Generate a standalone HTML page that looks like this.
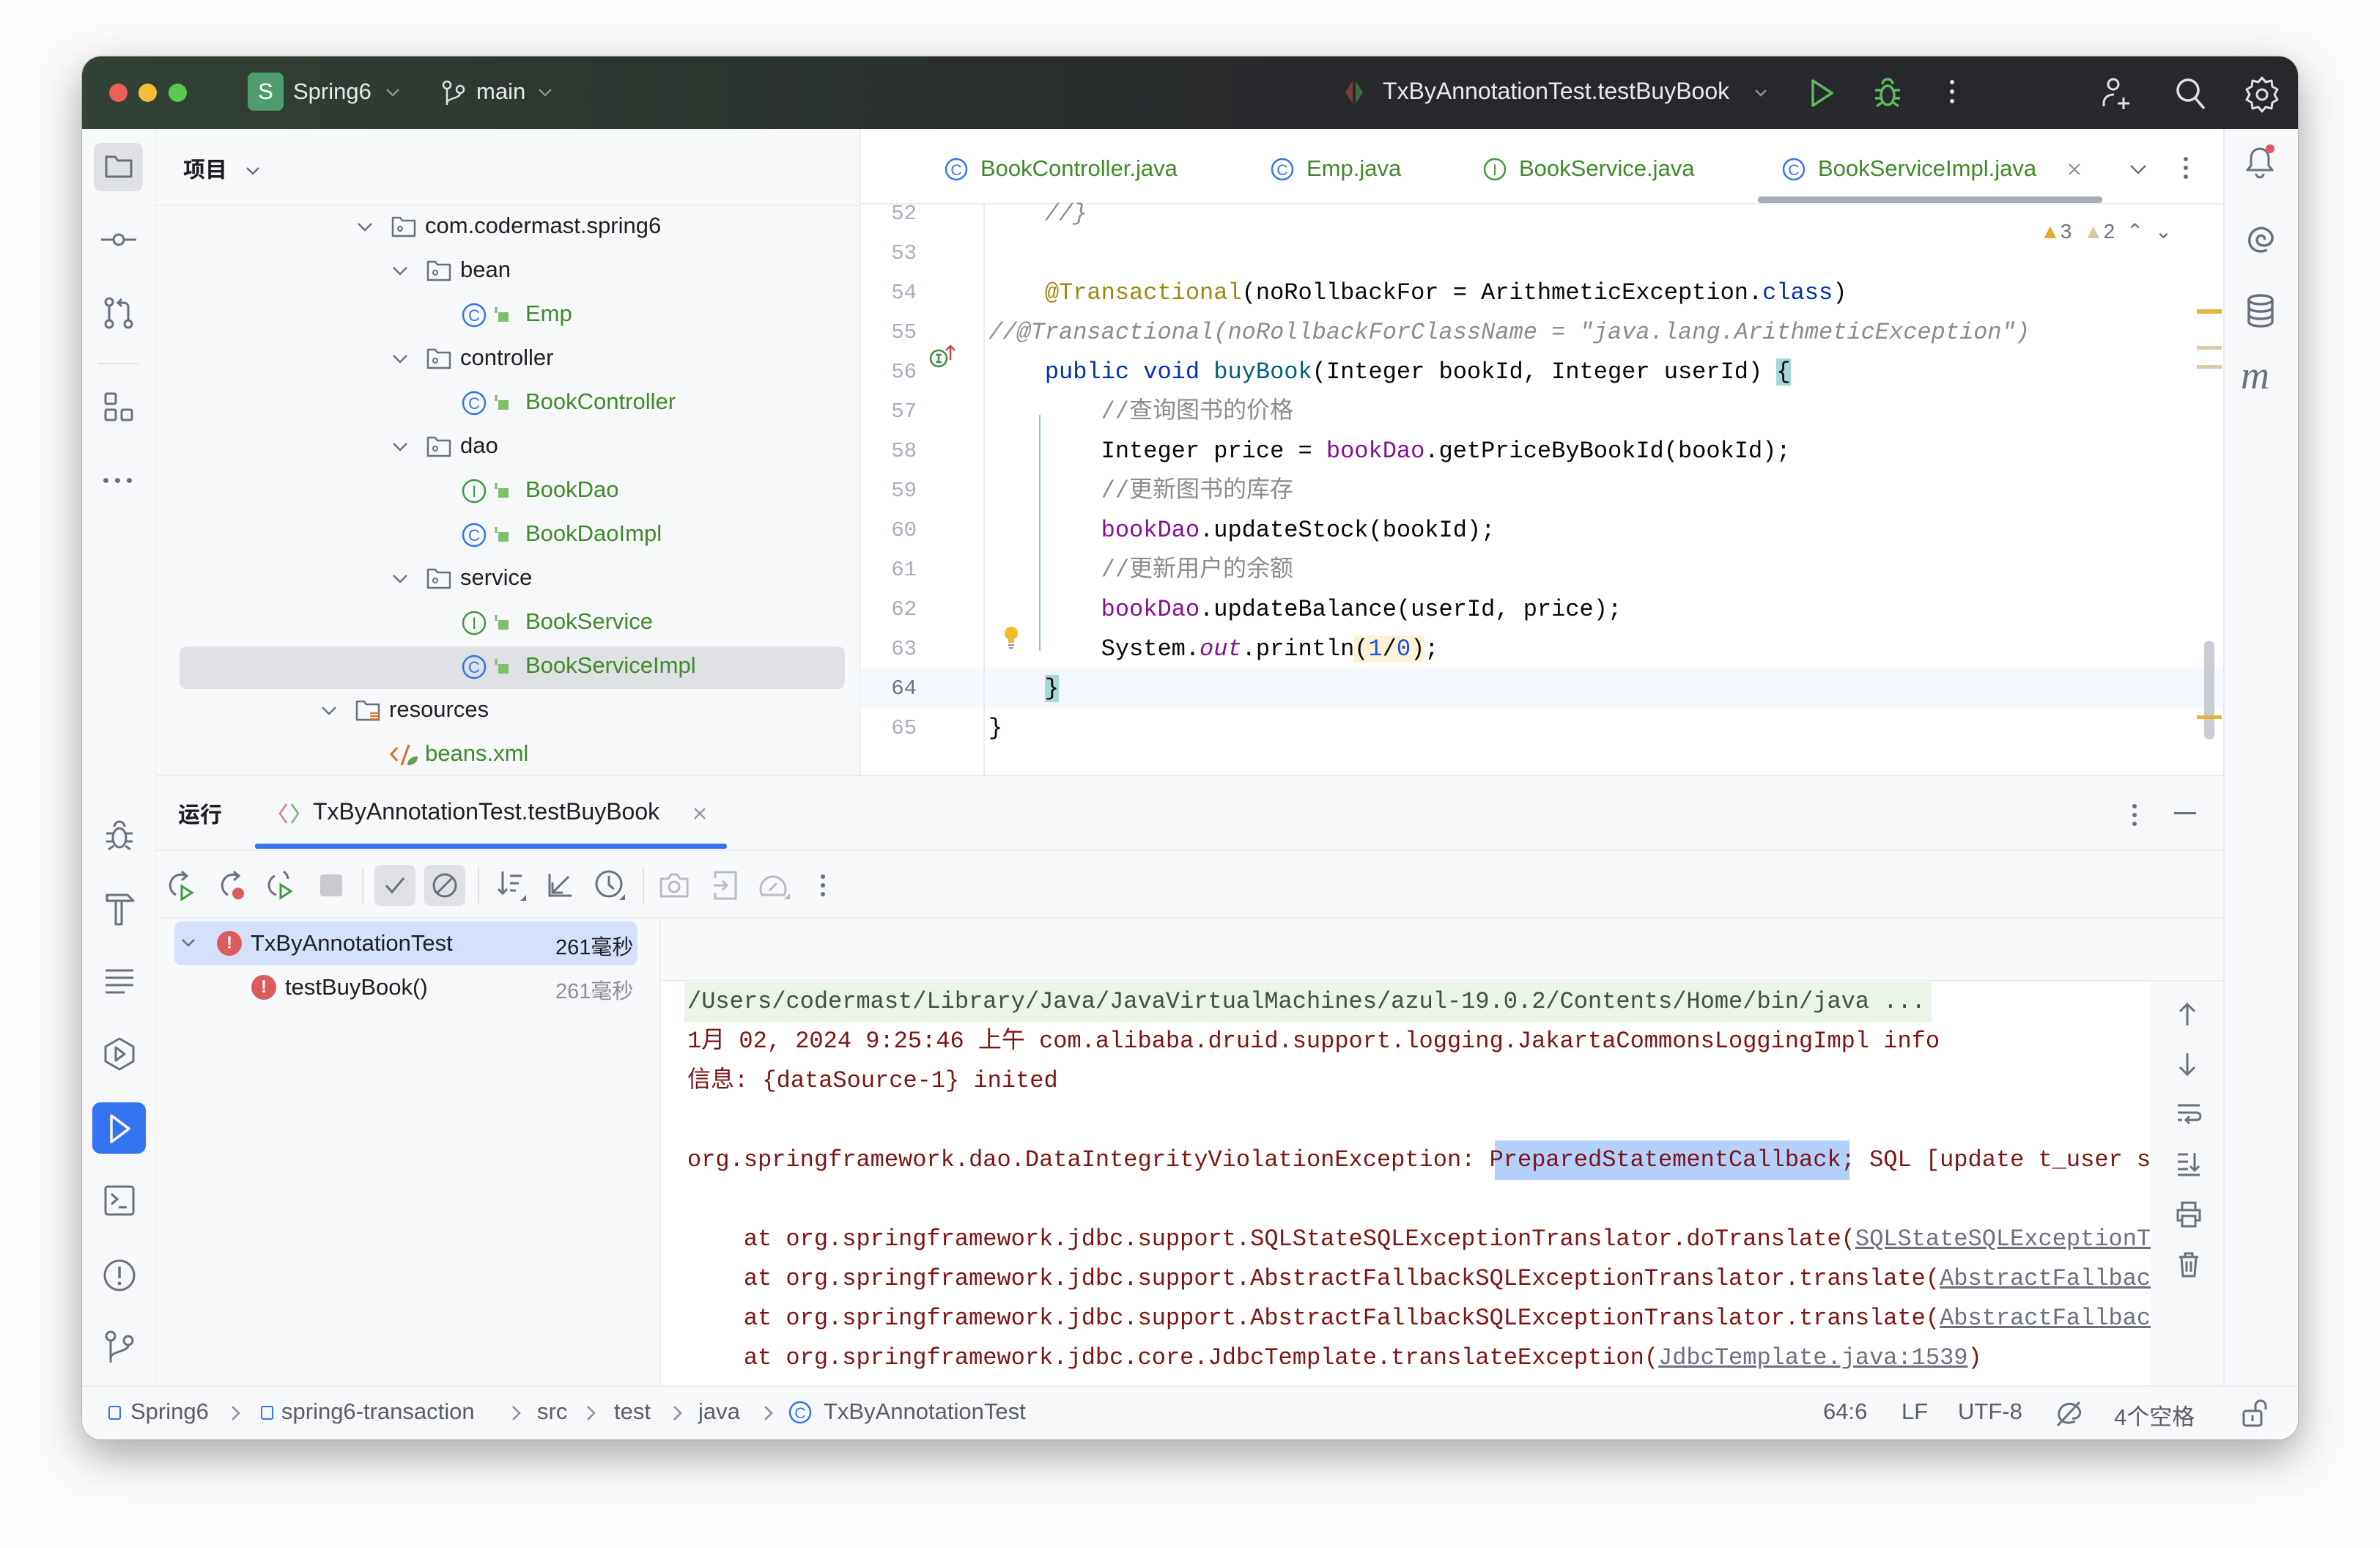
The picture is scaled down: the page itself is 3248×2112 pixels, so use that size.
<!DOCTYPE html>
<html><head><meta charset="utf-8"><style>
*{margin:0;padding:0;box-sizing:border-box}
html,body{width:3248px;height:2112px;background:#fbfbfb;overflow:hidden;font-family:"Liberation Sans","Noto Sans CJK SC",sans-serif}
.win{position:absolute;left:112px;top:77px;width:3024px;height:1887px;border-radius:26px;background:#f7f8fa;overflow:hidden;box-shadow:0 20px 60px rgba(0,0,0,.35),0 0 0 1px rgba(0,0,0,.15)}
.a{position:absolute;white-space:pre}
.ui{font-size:31px;color:#1e1f22}
.mono{font-family:"Liberation Mono","Noto Sans CJK SC",monospace;font-size:32px}
.g{color:#3f8a2a}
svg{position:absolute;overflow:visible}
</style></head><body>
<div class="win">
<div class="a" style="left:0;top:0;width:3024px;height:99px;background:linear-gradient(90deg,#324236 0%,#2b332e 30%,#27282c 55%,#27282c 100%)"></div>
<div class="a" style="left:37px;top:37px;width:25px;height:25px;border-radius:50%;background:#ee5f57"></div>
<div class="a" style="left:77px;top:37px;width:25px;height:25px;border-radius:50%;background:#f6bd3a"></div>
<div class="a" style="left:118px;top:37px;width:25px;height:25px;border-radius:50%;background:#5ac94e"></div>
<div class="a" style="left:226px;top:22px;width:49px;height:52px;border-radius:8px;background:#4f9c6e;color:#fff;font-size:31px;text-align:center;line-height:52px">S</div>
<div class="a" style="left:288px;top:30px;font-size:31px;color:#e8e9ec">Spring6</div>
<svg style="left:414px;top:42px" width="20" height="14"><path d="M2 3l8 8 8-8" fill="none" stroke="#8c8f96" stroke-width="2.5"/></svg>
<svg style="left:490px;top:32px" width="34" height="36"><circle cx="8" cy="7" r="5" fill="none" stroke="#dfe1e5" stroke-width="2.5"/><circle cx="26" cy="13" r="5" fill="none" stroke="#dfe1e5" stroke-width="2.5"/><path d="M8 12v22M26 18c0 8-18 6-18 14" fill="none" stroke="#dfe1e5" stroke-width="2.5"/></svg>
<div class="a" style="left:538px;top:30px;font-size:31px;color:#e8e9ec">main</div>
<svg style="left:622px;top:42px" width="20" height="14"><path d="M2 3l8 8 8-8" fill="none" stroke="#8c8f96" stroke-width="2.5"/></svg>
<svg style="left:1722px;top:32px" width="30" height="34"><path d="M12 2L2 17l10 15z" fill="#7b3b3b"/><path d="M16 2l10 15-10 15z" fill="#3b6b3f"/></svg>
<div class="a" style="left:1775px;top:29px;font-size:32px;color:#e8e9ec">TxByAnnotationTest.testBuyBook</div>
<svg style="left:2282px;top:44px" width="18" height="12"><path d="M2 2l7 7 7-7" fill="none" stroke="#8c8f96" stroke-width="2.5"/></svg>
<svg style="left:2358px;top:30px" width="34" height="40"><path d="M4 3l26 17L4 37z" fill="none" stroke="#5fb85f" stroke-width="3.5" stroke-linejoin="round"/></svg>
<svg style="left:2444px;top:28px" width="40" height="44"><ellipse cx="20" cy="25" rx="9" ry="13" fill="none" stroke="#5fb85f" stroke-width="3.5"/><path d="M13 10a7 7 0 0114 0M3 18h8M29 18h8M3 29h8M29 29h8M5 40l7-5M35 40l-7-5" fill="none" stroke="#5fb85f" stroke-width="3.5"/></svg>
<div class="a" style="left:2549px;top:32px;width:6px;height:6px;border-radius:3px;background:#dfe1e5;box-shadow:0 13px 0 #dfe1e5,0 26px 0 #dfe1e5"></div>
<svg style="left:2756px;top:28px" width="46" height="46"><circle cx="16" cy="10" r="7" fill="none" stroke="#dfe1e5" stroke-width="3"/><path d="M3 40v-4c0-8 6-12 14-12" fill="none" stroke="#dfe1e5" stroke-width="3"/><path d="M30 28v16M22 36h16" stroke="#dfe1e5" stroke-width="3"/></svg>
<svg style="left:2856px;top:28px" width="44" height="46"><circle cx="18" cy="18" r="14" fill="none" stroke="#dfe1e5" stroke-width="3.5"/><path d="M28 29l12 14" stroke="#dfe1e5" stroke-width="3.5"/></svg>
<svg style="left:2952px;top:27px" width="46" height="46"><path d="M23 2l5 6 8-2 1 8 7 4-4 7 4 7-7 4-1 8-8-2-5 6-5-6-8 2-1-8-7-4 4-7-4-7 7-4 1-8 8 2z" fill="none" stroke="#dfe1e5" stroke-width="3" stroke-linejoin="round"/><circle cx="23" cy="25" r="7" fill="none" stroke="#dfe1e5" stroke-width="3"/></svg>

<div class="a" style="left:100px;top:99px;width:1px;height:1792px;background:#ebecf0"></div>
<div class="a" style="left:16px;top:118px;width:67px;height:66px;border-radius:10px;background:#dfe1e5"></div>
<svg style="left:31px;top:133px" width="38" height="34"><path d="M2 4h12l4 5h18v22H2z" fill="none" stroke="#6c707e" stroke-width="3" stroke-linejoin="round"/></svg>
<svg style="left:26px;top:240px" width="48" height="20"><circle cx="24" cy="10" r="7" fill="none" stroke="#6c707e" stroke-width="3"/><path d="M0 10h17M31 10h17" stroke="#6c707e" stroke-width="3"/></svg>
<svg style="left:30px;top:328px" width="40" height="44"><circle cx="7" cy="7" r="5" fill="none" stroke="#6c707e" stroke-width="3"/><circle cx="7" cy="37" r="5" fill="none" stroke="#6c707e" stroke-width="3"/><circle cx="33" cy="37" r="5" fill="none" stroke="#6c707e" stroke-width="3"/><path d="M7 12v20M33 32V14c0-4-3-6-7-6h-6M24 3l-5 5 5 5" fill="none" stroke="#6c707e" stroke-width="3"/></svg>
<div class="a" style="left:22px;top:418px;width:56px;height:2px;background:#dfe1e5"></div>
<svg style="left:30px;top:458px" width="40" height="42"><rect x="2" y="2" width="14" height="14" rx="2" fill="none" stroke="#6c707e" stroke-width="3"/><rect x="2" y="24" width="14" height="14" rx="2" fill="none" stroke="#6c707e" stroke-width="3"/><rect x="24" y="24" width="14" height="14" rx="2" fill="none" stroke="#6c707e" stroke-width="3"/></svg>
<div class="a" style="left:29px;top:575px;width:7px;height:7px;border-radius:4px;background:#6c707e;box-shadow:16px 0 0 #6c707e,32px 0 0 #6c707e"></div>
<svg style="left:30px;top:1040px" width="42" height="46"><ellipse cx="21" cy="26" rx="9" ry="13" fill="none" stroke="#6c707e" stroke-width="3"/><path d="M14 11a7 7 0 0114 0M3 20h9M30 20h9M3 31h9M30 31h9M6 42l7-5M36 42l-7-5" fill="none" stroke="#6c707e" stroke-width="3"/></svg>
<svg style="left:30px;top:1140px" width="44" height="46"><path d="M4 4h28l8 8H4zM16 12v32h8V12" fill="none" stroke="#6c707e" stroke-width="3" stroke-linejoin="round"/></svg>
<svg style="left:30px;top:1244px" width="42" height="36"><path d="M2 3h38M2 13h38M2 23h38M2 33h26" stroke="#6c707e" stroke-width="3"/></svg>
<svg style="left:28px;top:1338px" width="46" height="46"><path d="M23 2l19 11v20L23 44 4 33V13z" fill="none" stroke="#6c707e" stroke-width="3" stroke-linejoin="round"/><path d="M18 14l12 9-12 9z" fill="none" stroke="#6c707e" stroke-width="3" stroke-linejoin="round"/></svg>
<div class="a" style="left:14px;top:1427px;width:73px;height:70px;border-radius:11px;background:#3574f0"></div>
<svg style="left:36px;top:1442px" width="32" height="42"><path d="M4 3l24 18L4 39z" fill="none" stroke="#fff" stroke-width="3.5" stroke-linejoin="round"/></svg>
<svg style="left:30px;top:1540px" width="42" height="42"><rect x="2" y="2" width="38" height="38" rx="3" fill="none" stroke="#6c707e" stroke-width="3"/><path d="M10 12l8 7-8 7M20 30h11" fill="none" stroke="#6c707e" stroke-width="3"/></svg>
<svg style="left:28px;top:1640px" width="46" height="46"><circle cx="23" cy="23" r="20" fill="none" stroke="#6c707e" stroke-width="3"/><path d="M23 11v16" stroke="#6c707e" stroke-width="3.5"/><circle cx="23" cy="34" r="2.5" fill="#6c707e"/></svg>
<svg style="left:30px;top:1738px" width="42" height="46"><circle cx="9" cy="8" r="6" fill="none" stroke="#6c707e" stroke-width="3"/><circle cx="33" cy="14" r="6" fill="none" stroke="#6c707e" stroke-width="3"/><path d="M9 14v30M33 20c0 10-24 8-24 18" fill="none" stroke="#6c707e" stroke-width="3"/></svg>

<div class="a ui" style="left:138px;top:130px;font-weight:bold;font-family:'Noto Sans CJK SC',sans-serif;font-size:30px;line-height:44px">项目</div>
<svg style="left:223px;top:150px" width="20" height="12"><path d="M2 2l8 8 8-8" fill="none" stroke="#6c707e" stroke-width="2.5"/></svg>
<div class="a" style="left:101px;top:202px;width:962px;height:2px;background:#ebecf0"></div>
<div class="a" style="left:1062px;top:99px;width:2px;height:882px;background:#ebecf0"></div>
<div class="a" style="left:133px;top:805px;width:908px;height:58px;border-radius:10px;background:#dfe1e5"></div>
<div id="tree"></div>

<div class="a" style="left:1063px;top:99px;width:1860px;height:882px;background:#fff"></div>
<div class="a" style="left:1063px;top:200px;width:1860px;height:2px;background:#ebecf0"></div>
<div class="a" style="left:2287px;top:191px;width:470px;height:9px;border-radius:4px;background:#a9adb8"></div>
<div id="tabs"></div>
<div class="a" style="left:1063px;top:835px;width:1860px;height:54px;background:#f5f8fe"></div>
<div class="a" style="left:1230px;top:202px;width:2px;height:779px;background:#ebecf0"></div>
<div class="a" style="left:1306px;top:489px;width:2px;height:322px;background:#8cc3bd"></div>
<div id="code"></div>
<div class="a" style="left:2672px;top:219px;font-size:28px;color:#6c707e;line-height:40px"><span style="color:#e5a823">▲</span>3 &nbsp;<span style="color:#d8c9a0">▲</span>2 &nbsp;⌃ &nbsp;⌄</div>
<div class="a" style="left:2886px;top:345px;width:34px;height:6px;background:#e8b33b"></div>
<div class="a" style="left:2886px;top:395px;width:34px;height:5px;background:#d9ccaa"></div>
<div class="a" style="left:2886px;top:421px;width:34px;height:5px;background:#d9ccaa"></div>
<div class="a" style="left:2896px;top:797px;width:14px;height:135px;border-radius:7px;background:#c9ccd3"></div>
<div class="a" style="left:2886px;top:899px;width:34px;height:5px;background:#e8b33b"></div>
<div class="a" style="left:2922px;top:99px;width:2px;height:1792px;background:#ebecf0"></div>
<svg style="left:2952px;top:120px" width="40" height="46"><path d="M20 6c-8 0-12 6-12 13v10l-5 6h34l-5-6V19c0-7-4-13-12-13zM15 40a5 5 0 0010 0" fill="none" stroke="#6c707e" stroke-width="3" stroke-linejoin="round"/><circle cx="34" cy="6" r="6" fill="#e55765"/></svg>
<svg style="left:2952px;top:226px" width="40" height="44"><path d="M30 38C14 44 4 34 6 22S22 4 32 12s4 20-6 20-12-8-8-12 10 0 8 4" fill="none" stroke="#6c707e" stroke-width="3.5"/></svg>
<svg style="left:2954px;top:324px" width="38" height="46"><ellipse cx="19" cy="8" rx="16" ry="6" fill="none" stroke="#6c707e" stroke-width="3.5"/><path d="M3 8v30c0 8 32 8 32 0V8M3 18c0 8 32 8 32 0M3 28c0 8 32 8 32 0" fill="none" stroke="#6c707e" stroke-width="3.5"/></svg>
<div class="a" style="left:2946px;top:404px;font-size:54px;font-style:italic;color:#6c707e;font-family:'Liberation Serif',serif">m</div>

<div class="a" style="left:101px;top:980px;width:2822px;height:2px;background:#ebecf0"></div>
<div class="a ui" style="left:131px;top:1010px;font-weight:bold;font-size:30px;font-family:'Noto Sans CJK SC',sans-serif;line-height:44px">运行</div>
<svg style="left:268px;top:1018px" width="34" height="30"><path d="M11 2L2 15l9 13" fill="none" stroke="#d48383" stroke-width="2.5"/><path d="M18 2l9 13-9 13" fill="none" stroke="#7db37d" stroke-width="2.5"/></svg>
<div class="a ui" style="left:315px;top:1012px;font-size:32px">TxByAnnotationTest.testBuyBook</div>
<svg style="left:834px;top:1024px" width="18" height="18"><path d="M2 2l14 14M16 2L2 16" stroke="#8c8f96" stroke-width="2.2"/></svg>
<div class="a" style="left:236px;top:1074px;width:644px;height:7px;border-radius:3px;background:#3574f0"></div>
<div class="a" style="left:2798px;top:1020px;width:6px;height:6px;border-radius:3px;background:#6c707e;box-shadow:0 12px 0 #6c707e,0 24px 0 #6c707e"></div>
<div class="a" style="left:2855px;top:1031px;width:30px;height:3px;background:#6c707e"></div>
<div class="a" style="left:101px;top:1082px;width:2822px;height:2px;background:#ebecf0"></div>
<div id="tb"></div>
<div class="a" style="left:101px;top:1174px;width:2822px;height:2px;background:#ebecf0"></div>
<div class="a" style="left:788px;top:1176px;width:2px;height:715px;background:#ebecf0"></div>
<div class="a" style="left:126px;top:1180px;width:632px;height:60px;border-radius:10px;background:#d5e0fb"></div>
<svg style="left:135px;top:1203px" width="20" height="12"><path d="M2 2l8 8 8-8" fill="none" stroke="#6c707e" stroke-width="2.5"/></svg>
<div class="a" style="left:184px;top:1193px;width:34px;height:34px;border-radius:17px;background:#db5c5c;color:#fff;font-weight:bold;font-size:24px;text-align:center;line-height:34px">!</div>
<div class="a ui" style="left:230px;top:1192px">TxByAnnotationTest</div>
<div class="a ui" style="left:646px;top:1192px;font-size:29px">261毫秒</div>
<div class="a" style="left:231px;top:1253px;width:34px;height:34px;border-radius:17px;background:#db5c5c;color:#fff;font-weight:bold;font-size:24px;text-align:center;line-height:34px">!</div>
<div class="a ui" style="left:277px;top:1252px">testBuyBook()</div>
<div class="a ui" style="left:646px;top:1252px;font-size:29px;color:#8c8f96">261毫秒</div>
<div class="a" style="left:797px;top:1265px;width:34px;height:34px;border-radius:17px;background:#db5c5c;color:#fff;font-weight:bold;font-size:24px;text-align:center;line-height:34px">!</div>
<div class="a ui" style="left:842px;top:1264px;font-size:30px;color:#b2261c">测试 失败: 1<span style="color:#818594">共 1 个测试 – 261毫秒</span></div>
<div class="a" style="left:790px;top:1260px;width:2133px;height:2px;background:#ebecf0"></div>
<div class="a" style="left:790px;top:1262px;width:2034px;height:629px;background:#fff"></div>
<div class="a" style="left:822px;top:1263px;width:1702px;height:54px;background:#eaf4e7"></div>
<div class="a" style="left:1928px;top:1479px;width:484px;height:54px;background:#b3d1fb"></div>
<div id="con"></div>
<div id="cicons"></div>
<div class="a" style="left:0;top:1813px;width:3024px;height:2px;background:#ebecf0"></div>
<div class="a" style="left:0;top:1815px;width:3024px;height:72px;background:#f7f8fa"></div>
<div id="sb"></div>
</div>
<script>
function add(id,h){document.getElementById(id).outerHTML=h}
var T=[[0,"com.codermast.spring6","pkg"],[1,"bean","pkg"],[2,"Emp","C"],[1,"controller","pkg"],[2,"BookController","C"],[1,"dao","pkg"],[2,"BookDao","I"],[2,"BookDaoImpl","C"],[1,"service","pkg"],[2,"BookService","I"],[2,"BookServiceImpl","C"],[-1,"resources","res"],[0,"beans.xml","xml"]];
var h="";
T.forEach(function(r,i){var top=202+i*60,cy=top+30;var lv=r[0];
 if(r[2]=="pkg"||r[2]=="res"){var cx=(lv==-1?326:(lv==0?375:423));
  h+='<svg style="left:'+cx+'px;top:'+(cy-6)+'px" width="22" height="14"><path d="M2 2l9 9 9-9" fill="none" stroke="#6c707e" stroke-width="2.5"/></svg>';
  var fx=cx+47;
  h+='<svg style="left:'+fx+'px;top:'+(cy-15)+'px" width="34" height="30"><path d="M2 3h10l3 4h17v21H2z" fill="none" stroke="#6c707e" stroke-width="2.5" stroke-linejoin="round"/>'+(r[2]=="pkg"?'<circle cx="12" cy="18" r="3" fill="none" stroke="#6c707e" stroke-width="2"/>':'<path d="M20 19h12M20 23h12M20 27h12" stroke="#e06b2c" stroke-width="2"/>')+'</svg>';
  h+='<div class="a ui" style="left:'+(fx+46)+'px;top:'+(cy-19)+'px">'+r[1]+'</div>';}
 else if(r[2]=="xml"){h+='<svg style="left:420px;top:'+(cy-17)+'px" width="40" height="36"><path d="M10 8L2 17l8 9M16 32L26 4" fill="none" stroke="#e06b2c" stroke-width="3"/><path d="M24 32c0-8 6-12 14-12 0 8-6 12-14 12z" fill="#5fa055"/></svg><div class="a ui g" style="left:468px;top:'+(cy-19)+'px">'+r[1]+'</div>';}
 else{var c=r[2]=="C"?"#3574f0":"#3f9a3f";
  h+='<svg style="left:517px;top:'+(cy-17)+'px" width="36" height="36"><circle cx="18" cy="18" r="15" fill="none" stroke="'+c+'" stroke-width="2.5"/><text x="18" y="26" font-size="22" text-anchor="middle" fill="'+c+'" font-family="Liberation Sans">'+r[2]+'</text></svg>';
  h+='<svg style="left:562px;top:'+(cy-12)+'px" width="22" height="24"><path d="M3 2v8" stroke="#7fbf6a" stroke-width="3"/><rect x="6" y="9" width="14" height="13" fill="#7fbf6a"/></svg>';
  h+='<div class="a ui g" style="left:605px;top:'+(cy-19)+'px">'+r[1]+'</div>';}
});
add("tree",h);
var TB=[[1176,"C","BookController.java"],[1621,"C","Emp.java"],[1911,"I","BookService.java"],[2319,"C","BookServiceImpl.java"]];h="";
TB.forEach(function(t){var c=t[1]=="C"?"#3574f0":"#3f9a3f";h+='<svg style="left:'+t[0]+'px;top:137px" width="34" height="34"><circle cx="17" cy="17" r="14" fill="none" stroke="'+c+'" stroke-width="2.5"/><text x="17" y="25" font-size="21" text-anchor="middle" fill="'+c+'" font-family="Liberation Sans">'+t[1]+'</text></svg><div class="a ui g" style="left:'+(t[0]+50)+'px;top:135px">'+t[2]+'</div>';});
h+='<svg style="left:2710px;top:145px" width="18" height="18"><path d="M2 2l14 14M16 2L2 16" stroke="#8c8f96" stroke-width="2.2"/></svg>';
h+='<svg style="left:2794px;top:147px" width="24" height="14"><path d="M2 2l10 10 10-10" fill="none" stroke="#6c707e" stroke-width="2.5"/></svg>';
h+='<div class="a" style="left:2868px;top:137px;width:6px;height:6px;border-radius:3px;background:#6c707e;box-shadow:0 12px 0 #6c707e,0 24px 0 #6c707e"></div>';
add("tabs",h);
var K='<span style="color:#0033b3">',F='<span style="color:#871094">',CM='<span style="color:#8c8c8c;font-style:italic">',CC='<span style="color:#8c8c8c">',E='</span>';
var L=[
[52,CM+'    //}'+E],[53,''],
[54,'    <span style="color:#9e880d">@Transactional</span>(noRollbackFor = ArithmeticException.'+K+'class'+E+')'],
[55,CM+'//@Transactional(noRollbackForClassName = "java.lang.ArithmeticException")'+E],
[56,'    '+K+'public void '+E+'<span style="color:#00627a">buyBook</span>(Integer bookId, Integer userId) <span style="background:#a6d8d8">{</span>'],
[57,CC+'        //查询图书的价格'+E],
[58,'        Integer price = '+F+'bookDao'+E+'.getPriceByBookId(bookId);'],
[59,CC+'        //更新图书的库存'+E],
[60,'        '+F+'bookDao'+E+'.updateStock(bookId);'],
[61,CC+'        //更新用户的余额'+E],
[62,'        '+F+'bookDao'+E+'.updateBalance(userId, price);'],
[63,'        System.'+F+'<i>out</i>'+E+'.println<span style="background:#fcf3d5">(<span style="color:#1750eb">1</span>/<span style="color:#1750eb">0</span>)</span>;'],
[64,'    <span style="background:#a6d8d8">}</span>'],[65,'}']];
h="";
L.forEach(function(l){var top=188+(l[0]-52)*54;
 h+='<div class="a mono" style="left:1087px;width:52px;text-align:right;top:'+top+'px;line-height:54px;font-size:29px;color:'+(l[0]==64?'#6c707e':'#a8adbd')+'">'+l[0]+'</div>';
 h+='<div class="a mono" style="left:1237px;top:'+top+'px;line-height:54px;color:#080808">'+l[1]+'</div>';});
h+='<svg style="left:1156px;top:392px" width="40" height="36"><circle cx="13" cy="20" r="11" fill="none" stroke="#3f8a3f" stroke-width="2.5"/><path d="M9 15h8M13 15v10M9 25h8" stroke="#3f8a3f" stroke-width="2.5"/><path d="M29 22V3M23 9l6-6 6 6" fill="none" stroke="#d84040" stroke-width="2.5"/></svg>';
h+='<svg style="left:1257px;top:776px" width="22" height="34"><circle cx="11" cy="11" r="9" fill="#f2b92b"/><rect x="7" y="19" width="8" height="5" fill="#f2b92b"/><path d="M7 27h8M8 31h6" stroke="#8c8f96" stroke-width="2"/></svg>';
add("code",h);
var G="#6c707e",LG="#b8bbc2";h="";
function at(cx,w,hh,inner){return '<svg style="left:'+(cx-w/2)+'px;top:'+(1131-hh/2)+'px" width="'+w+'" height="'+hh+'">'+inner+'</svg>'}
h+='<div class="a" style="left:399px;top:1103px;width:56px;height:56px;border-radius:8px;background:#dfe1e5"></div><div class="a" style="left:467px;top:1103px;width:56px;height:56px;border-radius:8px;background:#dfe1e5"></div>';
h+=at(134,40,42,'<path d="M28 8A14 14 0 1 0 14 34" fill="none" stroke="'+G+'" stroke-width="3"/><path d="M22 2l7 6-7 6" fill="none" stroke="'+G+'" stroke-width="3"/><path d="M22 22l14 9-14 9z" fill="none" stroke="#3f9a3f" stroke-width="3"/>');
h+=at(205,40,42,'<path d="M28 8A14 14 0 1 0 14 34" fill="none" stroke="'+G+'" stroke-width="3"/><path d="M22 2l7 6-7 6" fill="none" stroke="'+G+'" stroke-width="3"/><circle cx="28" cy="32" r="8" fill="#db5c5c"/>');
h+=at(271,40,42,'<path d="M12 8A14 14 0 0 0 14 34M24 2a14 14 0 0 1 6 10" fill="none" stroke="'+G+'" stroke-width="3"/><path d="M20 20l14 9-14 9z" fill="none" stroke="#3f9a3f" stroke-width="3"/>');
h+='<div class="a" style="left:325px;top:1116px;width:30px;height:30px;border-radius:4px;background:#c9cbd0"></div>';
h+='<div class="a" style="left:382px;top:1106px;width:2px;height:50px;background:#dfe1e5"></div>';
h+=at(427,30,26,'<path d="M3 13l8 9L27 3" fill="none" stroke="'+G+'" stroke-width="3"/>');
h+=at(495,36,36,'<circle cx="18" cy="18" r="15" fill="none" stroke="'+G+'" stroke-width="3"/><path d="M8 28L28 8" stroke="'+G+'" stroke-width="3"/>');
h+='<div class="a" style="left:540px;top:1106px;width:2px;height:50px;background:#dfe1e5"></div>';
h+=at(586,40,42,'<path d="M8 2v30M2 26l6 6 6-6M18 8h16M18 18h12M18 28h8" fill="none" stroke="'+G+'" stroke-width="3"/><path d="M40 34v8h-8z" fill="'+G+'"/>');
h+=at(652,36,40,'<path d="M4 4v30h30M8 30L30 8M8 16v14h14" fill="none" stroke="'+G+'" stroke-width="3"/>');
h+=at(721,44,44,'<circle cx="20" cy="20" r="17" fill="none" stroke="'+G+'" stroke-width="3"/><path d="M20 9v12l7 6" fill="none" stroke="'+G+'" stroke-width="3"/><path d="M42 34v8h-8z" fill="'+G+'"/>');
h+='<div class="a" style="left:765px;top:1106px;width:2px;height:50px;background:#dfe1e5"></div>';
h+=at(808,40,34,'<path d="M2 8h10l4-6h8l4 6h10v24H2z" fill="none" stroke="'+LG+'" stroke-width="3" stroke-linejoin="round"/><circle cx="20" cy="19" r="7" fill="none" stroke="'+LG+'" stroke-width="3"/>');
h+=at(878,36,40,'<path d="M4 10V2h28v36H4v-8M2 20h18M14 14l6 6-6 6" fill="none" stroke="'+LG+'" stroke-width="3"/>');
h+=at(944,44,42,'<path d="M6 34a17 17 0 1 1 30 0z" fill="none" stroke="'+LG+'" stroke-width="3"/><path d="M16 28l10-10" stroke="'+LG+'" stroke-width="3"/><path d="M44 32v8h-8z" fill="'+LG+'"/>');
h+='<div class="a" style="left:1008px;top:1116px;width:6px;height:6px;border-radius:3px;background:'+G+';box-shadow:0 12px 0 '+G+',0 24px 0 '+G+'"></div>';
add("tb",h);
var C=[['/Users/codermast/Library/Java/JavaVirtualMachines/azul-19.0.2/Contents/Home/bin/java ...','#3d5240'],
['1月 02, 2024 9:25:46 上午 com.alibaba.druid.support.logging.JakartaCommonsLoggingImpl info'],
['信息: {dataSource-1} inited'],[''],
['org.springframework.dao.DataIntegrityViolationException: PreparedStatementCallback; SQL [update t_user s'],[''],
['    at org.springframework.jdbc.support.SQLStateSQLExceptionTranslator.doTranslate(<u style="color:#6c707e">SQLStateSQLExceptionT</u>'],
['    at org.springframework.jdbc.support.AbstractFallbackSQLExceptionTranslator.translate(<u style="color:#6c707e">AbstractFallbac</u>'],
['    at org.springframework.jdbc.support.AbstractFallbackSQLExceptionTranslator.translate(<u style="color:#6c707e">AbstractFallbac</u>'],
['    at org.springframework.jdbc.core.JdbcTemplate.translateException(<u style="color:#6c707e">JdbcTemplate.java:1539</u>)']];
h='<div class="a" style="left:790px;top:1262px;width:2034px;height:629px;overflow:hidden">';
C.forEach(function(c,i){h+='<div class="a mono" style="left:36px;top:'+(1+i*54)+'px;line-height:54px;color:'+(c[1]||'#7f1414')+'">'+c[0]+'</div>';});
h+='</div>';
add("con",h);
h="";var ix=2858;
h+='<svg style="left:'+ix+'px;top:1290px" width="30" height="34"><path d="M15 32V3M5 13l10-10 10 10" fill="none" stroke="'+G+'" stroke-width="3"/></svg>';
h+='<svg style="left:'+ix+'px;top:1358px" width="30" height="34"><path d="M15 2v29M5 21l10 10 10-10" fill="none" stroke="'+G+'" stroke-width="3"/></svg>';
h+='<svg style="left:'+ix+'px;top:1427px" width="34" height="32"><path d="M2 4h30M2 14h26a5 5 0 010 10H14M18 19l-5 5 5 5M2 24h6" fill="none" stroke="'+G+'" stroke-width="3"/></svg>';
h+='<svg style="left:'+ix+'px;top:1494px" width="34" height="34"><path d="M2 4h14M2 14h14M2 24h14M25 2v24M19 20l6 6 6-6M2 32h30" fill="none" stroke="'+G+'" stroke-width="3"/></svg>';
h+='<svg style="left:'+ix+'px;top:1562px" width="34" height="36"><path d="M8 12V2h18v10M8 26H2V12h30v14h-6M8 20h18v14H8z" fill="none" stroke="'+G+'" stroke-width="3"/></svg>';
h+='<svg style="left:'+(ix+2)+'px;top:1630px" width="30" height="36"><path d="M2 8h26M10 8V3h10v5M5 8l2 26h16l2-26M12 14v14M18 14v14" fill="none" stroke="'+G+'" stroke-width="3"/></svg>';
add("cicons",h);
var S="#5a5d63";h="";
var sq=function(x){return '<div class="a" style="left:'+x+'px;top:1841px;width:17px;height:19px;border:2.5px solid #3574f0;border-radius:3px"></div>'};
var ch=function(x){return '<svg style="left:'+x+'px;top:1840px" width="14" height="22"><path d="M2 2l9 9-9 9" fill="none" stroke="#8c8f96" stroke-width="2.5"/></svg>'};
var tx=function(x,t){return '<div class="a ui" style="left:'+x+'px;top:1831px;color:'+S+'">'+t+'</div>'};
h+=sq(36)+tx(66,"Spring6")+ch(203)+sq(244)+tx(272,"spring6-transaction")+ch(586)+tx(621,"src")+ch(688)+tx(726,"test")+ch(806)+tx(841,"java")+ch(930);
h+='<svg style="left:963px;top:1833px" width="34" height="34"><circle cx="17" cy="17" r="14" fill="none" stroke="#3574f0" stroke-width="2.5"/><text x="17" y="25" font-size="21" text-anchor="middle" fill="#3574f0" font-family="Liberation Sans">C</text></svg>';
h+=tx(1012,"TxByAnnotationTest")+tx(2376,"64:6")+tx(2483,"LF")+tx(2560,"UTF-8")+tx(2773,"4个空格");
h+='<svg style="left:2692px;top:1832px" width="38" height="38"><path d="M28 30C14 36 4 28 6 18S20 2 30 10s2 18-6 16" fill="none" stroke="'+G+'" stroke-width="3"/><path d="M4 36L34 4" stroke="'+G+'" stroke-width="3"/></svg>';
h+='<svg style="left:2948px;top:1832px" width="36" height="40"><rect x="2" y="16" width="24" height="20" rx="3" fill="none" stroke="'+G+'" stroke-width="3"/><path d="M18 16V9a7 7 0 0114 0v5M14 22v8" fill="none" stroke="'+G+'" stroke-width="3"/></svg>';
add("sb",h);
</script>
</body></html>
